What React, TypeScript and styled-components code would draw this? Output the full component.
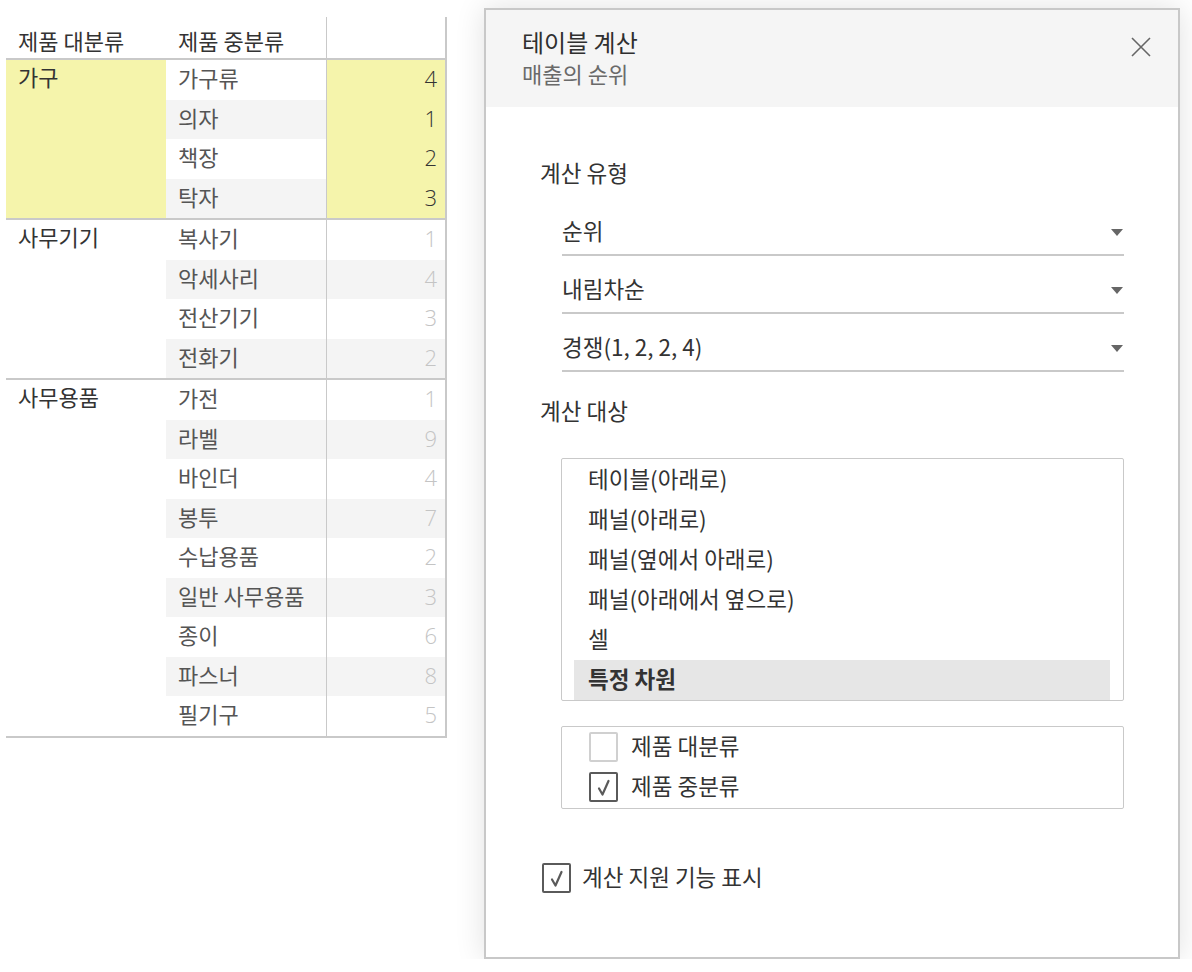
import React from 'react';
import styled, { createGlobalStyle } from 'styled-components';

const GlobalStyle = createGlobalStyle`
  html, body {
    margin: 0;
    padding: 0;
    background: #ffffff;
  }
  body {
    font-family: "Noto Sans CJK KR", "Noto Sans", sans-serif;
    color: #333333;
  }
`;

interface Group {
  name: string;
  highlight?: boolean;
  items: [string, number][];
}

const groups: Group[] = [
  {
    name: '가구',
    highlight: true,
    items: [
      ['가구류', 4],
      ['의자', 1],
      ['책장', 2],
      ['탁자', 3],
    ],
  },
  {
    name: '사무기기',
    items: [
      ['복사기', 1],
      ['악세사리', 4],
      ['전산기기', 3],
      ['전화기', 2],
    ],
  },
  {
    name: '사무용품',
    items: [
      ['가전', 1],
      ['라벨', 9],
      ['바인더', 4],
      ['봉투', 7],
      ['수납용품', 2],
      ['일반 사무용품', 3],
      ['종이', 6],
      ['파스너', 8],
      ['필기구', 5],
    ],
  },
];

const addressingOptions = [
  '테이블(아래로)',
  '패널(아래로)',
  '패널(옆에서 아래로)',
  '패널(아래에서 옆으로)',
  '셀',
  '특정 차원',
];

const LINE = '#c9c9c9';
const YELLOW = '#f5f4ab';
const BAND = '#f4f4f4';

const CheckMark = () => (
  <svg width="24" height="24" viewBox="0 0 24 24">
    <polyline points="7,13.5 10.5,19.5 16.5,6" fill="none" stroke="#5a5a5a" strokeWidth="2.2" strokeLinejoin="round" strokeLinecap="round" />
  </svg>
);

const Checkbox: React.FC<{ checked?: boolean }> = ({ checked }) => (
  <Box checked={!!checked}>{checked && <CheckMark />}</Box>
);

const App: React.FC = () => {
  let rowIndex = 0;
  return (
    <>
      <GlobalStyle />
      <Page>
        <Table>
          <HeaderRow>
            <HeaderCell>제품 대분류</HeaderCell>
            <HeaderCell>제품 중분류</HeaderCell>
            <HeaderValueCell />
          </HeaderRow>
          {groups.map((group) => (
            <GroupBlock key={group.name}>
              <GroupLabel highlight={!!group.highlight}>{group.name}</GroupLabel>
              <div>
                {group.items.map(([label, value]) => {
                  const banded = rowIndex++ % 2 === 1;
                  return (
                    <Row key={label} banded={banded}>
                      <NameCell>{label}</NameCell>
                      <ValueCell highlight={!!group.highlight}>{value}</ValueCell>
                    </Row>
                  );
                })}
              </div>
            </GroupBlock>
          ))}
        </Table>

        <Dialog>
          <DialogHeader>
            <TitleBlock>
              <Title>테이블 계산</Title>
              <Subtitle>매출의 순위</Subtitle>
            </TitleBlock>
            <CloseButton aria-label="닫기">
              <svg width="20" height="20" viewBox="0 0 20 20">
                <path d="M1 1 L19 19 M19 1 L1 19" stroke="#666" strokeWidth="1.6" fill="none" />
              </svg>
            </CloseButton>
          </DialogHeader>

          <DialogBody>
            <SectionLabel>계산 유형</SectionLabel>
            <Select first>
              <span>순위</span>
              <Arrow />
            </Select>
            <Select>
              <span>내림차순</span>
              <Arrow />
            </Select>
            <Select>
              <span>경쟁(1, 2, 2, 4)</span>
              <Arrow />
            </Select>

            <SectionLabel spaced>계산 대상</SectionLabel>
            <ListBox>
              {addressingOptions.map((option, i) => (
                <ListItem key={option} selected={i === addressingOptions.length - 1}>
                  {option}
                </ListItem>
              ))}
            </ListBox>

            <CheckList>
              <CheckRow>
                <Checkbox />
                <CheckText>제품 대분류</CheckText>
              </CheckRow>
              <CheckRow>
                <Checkbox checked />
                <CheckText>제품 중분류</CheckText>
              </CheckRow>
            </CheckList>

            <AssistRow>
              <Checkbox checked />
              <CheckText>계산 지원 기능 표시</CheckText>
            </AssistRow>
          </DialogBody>
        </Dialog>
      </Page>
    </>
  );
};

const Page = styled.div`
  display: flex;
  align-items: flex-start;
  padding-left: 6px;
`;

const Table = styled.div`
  width: 441px;
  margin-top: 17px;
  font-size: 22px;
`;

const HeaderRow = styled.div`
  display: grid;
  grid-template-columns: 160px 160px 121px;
  height: 41px;
  border-bottom: 2px solid ${LINE};
`;

const HeaderCell = styled.div`
  display: flex;
  align-items: center;
  padding: 5px 0 0 12px;
  color: #333;
  white-space: nowrap;
`;

const HeaderValueCell = styled.div`
  border-left: 1px solid ${LINE};
  border-right: 2px solid ${LINE};
`;

const GroupBlock = styled.div`
  display: grid;
  grid-template-columns: 160px 281px;
  border-bottom: 2px solid ${LINE};
`;

const GroupLabel = styled.div<{ highlight: boolean }>`
  background: ${({ highlight }) => (highlight ? YELLOW : 'transparent')};
  padding-left: 12px;
  line-height: 33px;
  color: #333;
`;

const Row = styled.div<{ banded: boolean }>`
  display: grid;
  grid-template-columns: 160px 121px;
  height: 39.5px;
  background: ${({ banded }) => (banded ? BAND : '#ffffff')};
`;

const NameCell = styled.div`
  display: flex;
  align-items: center;
  padding: 0 0 5px 12px;
  color: #555;
  white-space: nowrap;
`;

const ValueCell = styled.div<{ highlight: boolean }>`
  display: flex;
  align-items: center;
  justify-content: flex-end;
  padding: 0 8px 3px 0;
  border-left: 1px solid ${LINE};
  border-right: 2px solid ${LINE};
  background: ${({ highlight }) => (highlight ? YELLOW : 'transparent')};
  color: ${({ highlight }) => (highlight ? '#333' : '#c4c4c4')};
  font-family: "Open Sans", "Noto Sans", sans-serif;
  font-weight: 300;
  font-size: 22px;
`;

const Dialog = styled.div`
  box-sizing: border-box;
  margin: 8px 0 0 37px;
  width: 696px;
  height: 951px;
  border: 2px solid #c8c8c8;
  background: #ffffff;
  box-shadow: 0 0 28px rgba(0, 0, 0, 0.12);
  display: flex;
  flex-direction: column;
`;

const DialogHeader = styled.div`
  height: 97px;
  background: #f5f5f5;
  display: flex;
  justify-content: space-between;
  align-items: flex-start;
  padding: 0 27px 0 36px;
`;

const TitleBlock = styled.div`
  padding-top: 17px;
`;

const Title = styled.div`
  font-size: 24px;
  line-height: 30px;
  color: #2f2f2f;
`;

const Subtitle = styled.div`
  margin-top: 2px;
  font-size: 22px;
  line-height: 28px;
  color: #6a6a6a;
`;

const CloseButton = styled.button`
  margin-top: 27px;
  padding: 0;
  width: 20px;
  height: 20px;
  border: none;
  background: none;
  cursor: pointer;
  display: flex;
`;

const DialogBody = styled.div`
  padding: 0 54px;
  display: flex;
  flex-direction: column;
  font-size: 22.5px;
`;

const SectionLabel = styled.div<{ spaced?: boolean }>`
  margin-top: ${({ spaced }) => (spaced ? '26px' : '53px')};
  height: 30px;
  line-height: 25px;
  color: #333;
`;

const Select = styled.div<{ first?: boolean }>`
  box-sizing: border-box;
  margin: ${({ first }) => (first ? '22px' : '14px')} 0 0 22px;
  height: 44px;
  border-bottom: 2px solid ${LINE};
  display: flex;
  align-items: center;
  justify-content: space-between;
  padding-bottom: 6px;
  color: #333;
`;

const Arrow = styled.span`
  width: 0;
  height: 0;
  margin: 4px 1px 0 0;
  border-left: 6px solid transparent;
  border-right: 6px solid transparent;
  border-top: 7px solid #666;
`;

const ListBox = styled.div`
  box-sizing: border-box;
  margin: 30px 0 0 21px;
  height: 243px;
  border: 1px solid ${LINE};
  border-radius: 2px;
  padding: 1px 13px 0 12px;
  overflow: hidden;
`;

const ListItem = styled.div<{ selected: boolean }>`
  box-sizing: border-box;
  height: 40px;
  display: flex;
  align-items: center;
  padding: 0 0 4px 14px;
  background: ${({ selected }) => (selected ? '#e6e6e6' : 'transparent')};
  font-weight: ${({ selected }) => (selected ? 700 : 400)};
  color: #333;
`;

const CheckList = styled.div`
  box-sizing: border-box;
  margin: 25px 0 0 21px;
  height: 83px;
  border: 1px solid ${LINE};
  border-radius: 2px;
  padding: 0 0 0 27px;
`;

const CheckRow = styled.div`
  height: 40px;
  display: flex;
  align-items: center;
  gap: 13px;
  color: #333;
`;

const CheckText = styled.span`
  padding-bottom: 4px;
`;

const Box = styled.span<{ checked: boolean }>`
  box-sizing: border-box;
  flex: none;
  width: 29px;
  height: 30px;
  border: 2px solid ${({ checked }) => (checked ? '#5a5a5a' : '#d0d0d0')};
  border-radius: 2px;
  display: flex;
  align-items: center;
  justify-content: center;
  background: #fff;
`;

const AssistRow = styled.div`
  margin: 54px 0 0 2px;
  height: 30px;
  display: flex;
  align-items: center;
  gap: 11px;
  color: #333;
`;

export default App;
